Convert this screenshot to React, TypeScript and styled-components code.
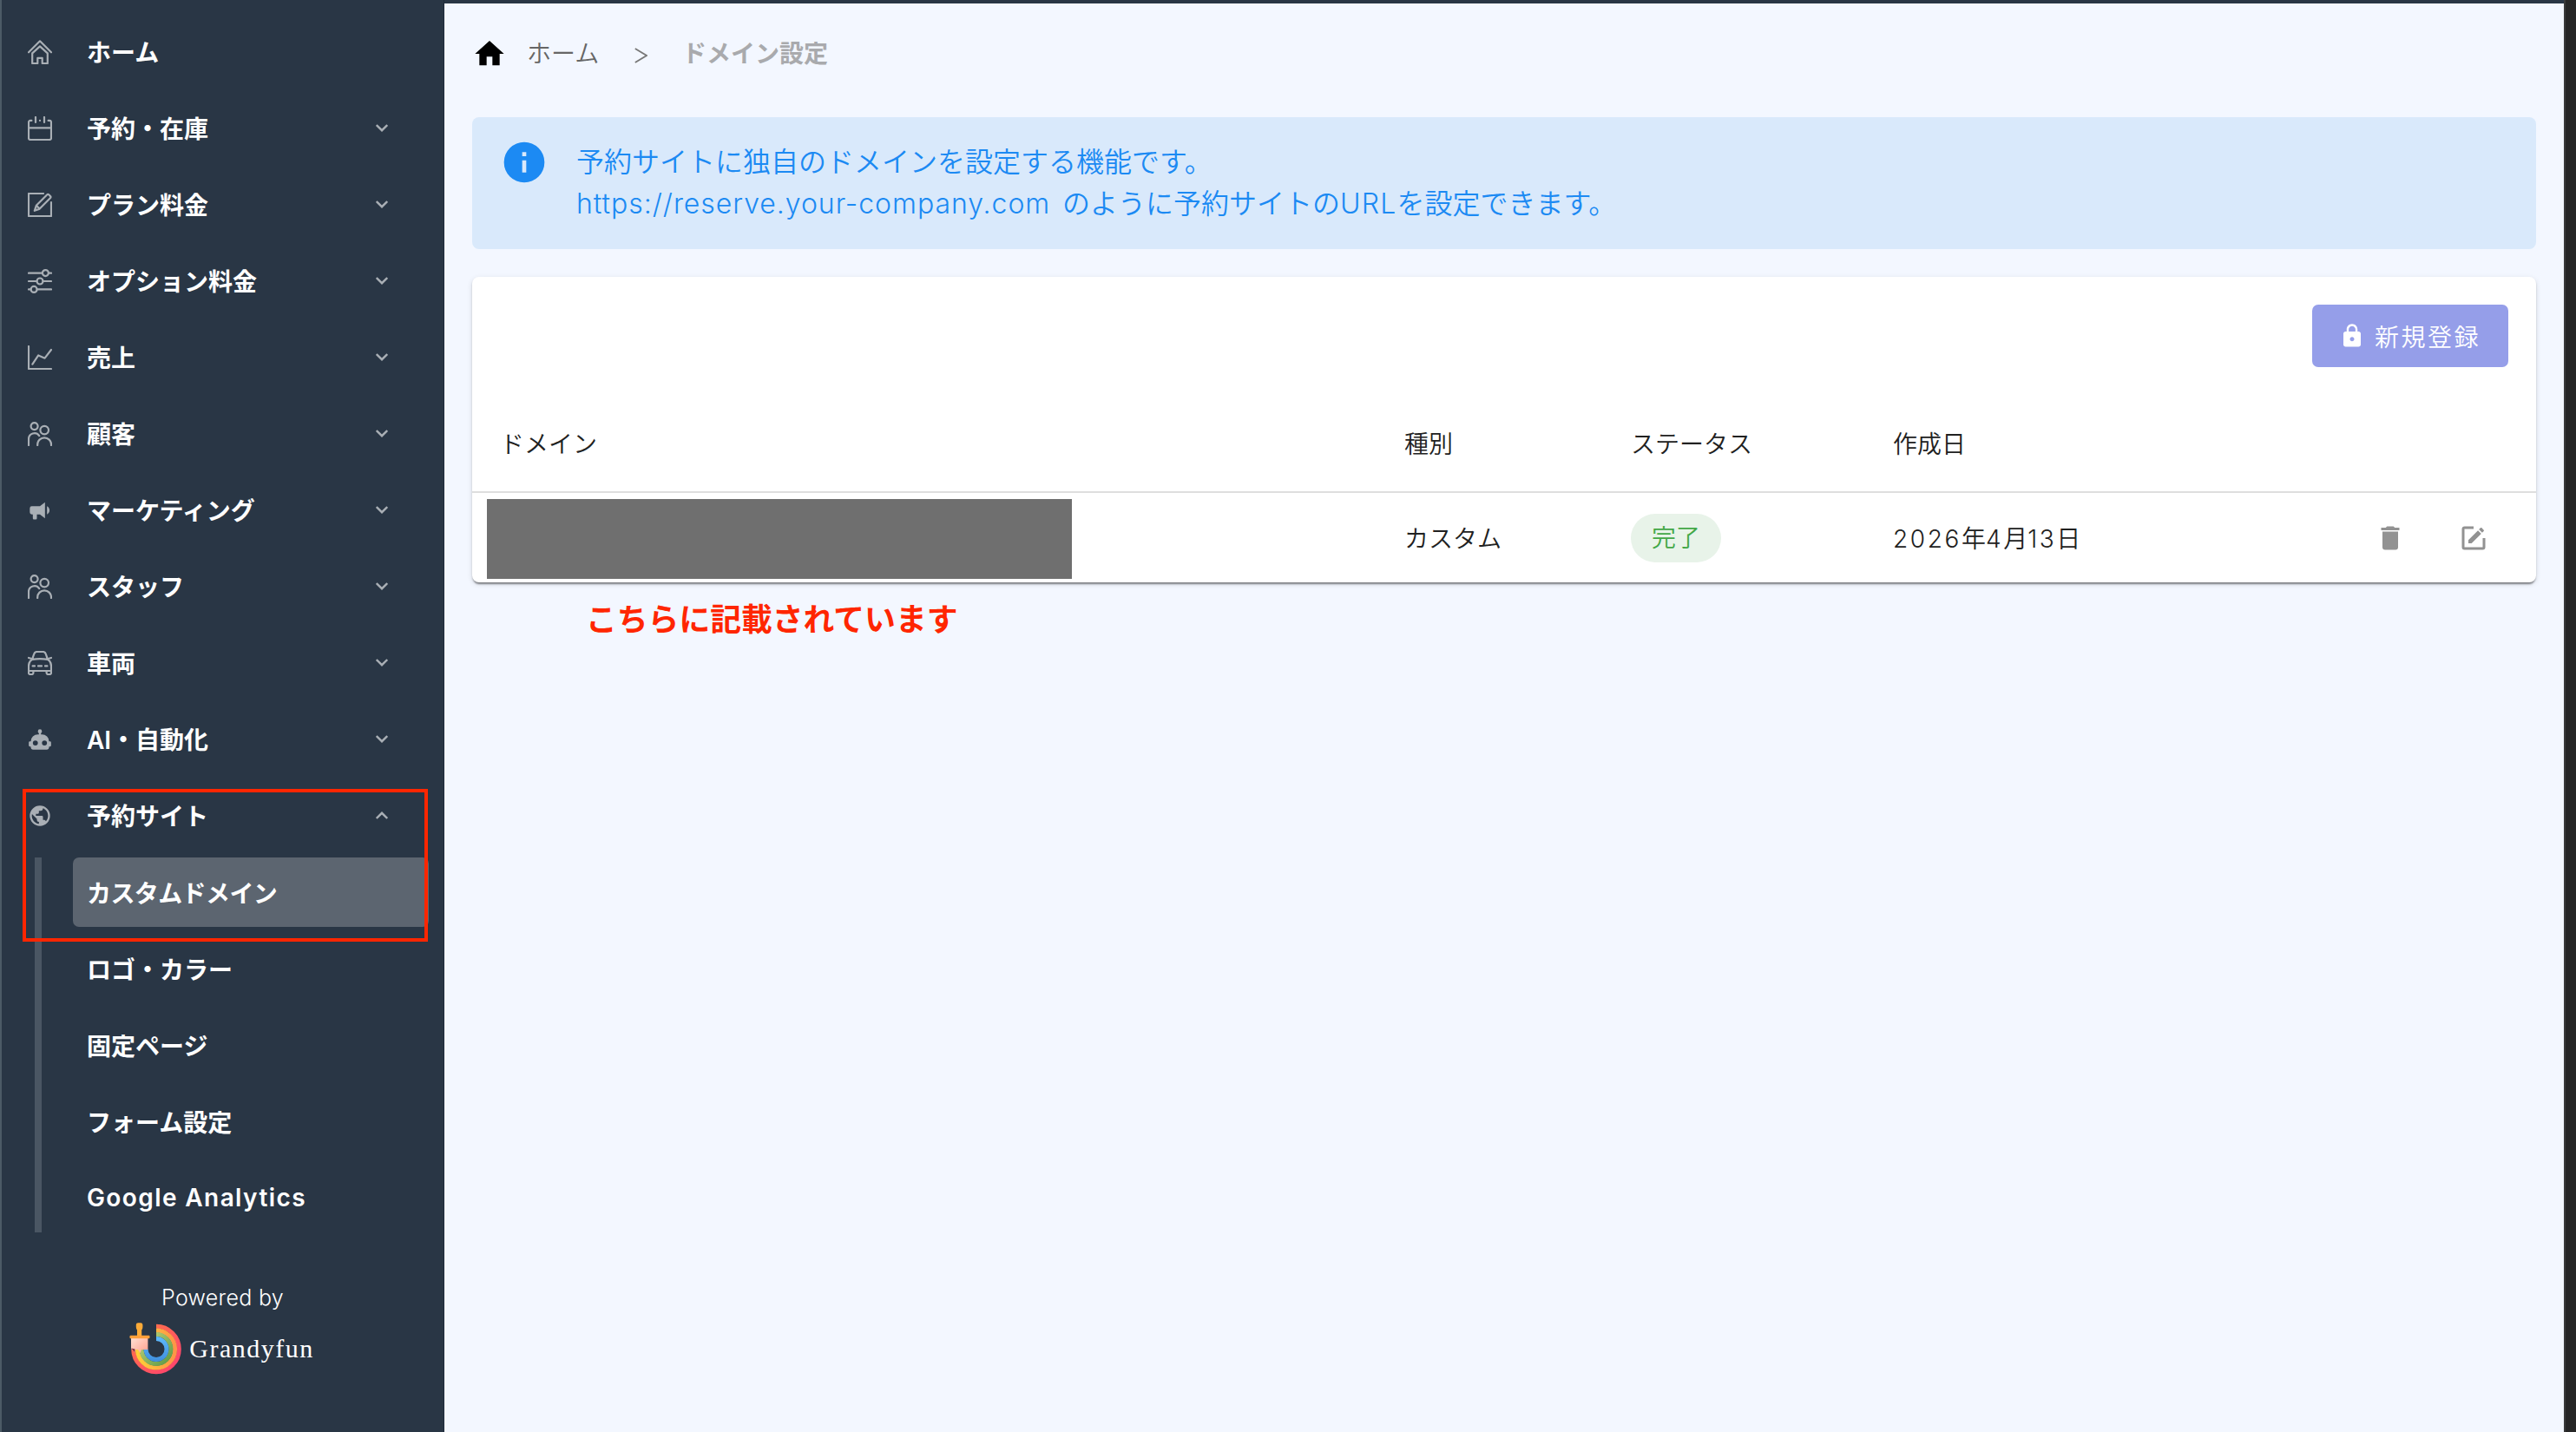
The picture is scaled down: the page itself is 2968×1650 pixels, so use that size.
import React from "react";
import styled, { createGlobalStyle, css } from "styled-components";

const ink = "#293645";
const iconGrey = "#a9afb5";

const GlobalStyle = createGlobalStyle`
  *, *::before, *::after { box-sizing: border-box; }
  html, body { margin: 0; padding: 0; }
  body {
    width: 2968px;
    height: 1650px;
    overflow: hidden;
    background: #262626;
    font-family: Inter, "Noto Sans CJK JP", sans-serif;
    font-size: 28px;
  }
`;

const Shell = styled.div`
  display: flex;
  height: 1650px;
  width: 2968px;
`;

const Sidebar = styled.aside`
  position: relative;
  display: flex;
  flex-direction: column;
  flex: none;
  width: 512px;
  height: 100%;
  padding-top: 16px;
  background: ${ink};
  border-left: 2px solid #4c5b66;
  border-right: 1px solid #1f2b3a;
  color: #fff;
  font-weight: 600;
`;

const NavRow = styled.a`
  display: grid;
  grid-template-columns: 28px 1fr 14px;
  column-gap: 42px;
  align-items: center;
  height: 88px;
  padding: 0 64px 0 30px;
  svg { display: block; color: ${iconGrey}; }
`;

const NavLabel = styled.span`
  line-height: 40px;
  white-space: nowrap;
  margin-left: -2px;
  padding-top: 2px;
`;

const SubNav = styled.div`
  display: flex;
  padding: 4px 17px 0 38px;
`;

const Rail = styled.div`
  width: 8px;
  height: 432px;
  background: #4a5663;
`;

const SubList = styled.div`
  display: flex;
  flex-direction: column;
  flex: 1;
  gap: 8px;
  margin-left: 36px;
`;

const SubItem = styled.a<{ $active?: boolean; $latin?: boolean }>`
  display: flex;
  align-items: center;
  height: 80px;
  padding-left: 16px;
  border-radius: 7px;
  white-space: nowrap;
  ${(p) => p.$active && css`background: #5c6570; letter-spacing: -0.6px;`}
  ${(p) => p.$latin && css`letter-spacing: 1.4px;`}
`;

const Highlight = styled.div`
  position: absolute;
  left: 24px;
  top: 909px;
  width: 467px;
  height: 176px;
  border: 4px solid #ff2600;
`;

const Powered = styled.div`
  display: flex;
  flex-direction: column;
  align-items: center;
  margin-top: 57px;
  font-weight: 300;
  font-size: 25px;
  line-height: 36px;
  letter-spacing: 0.3px;
`;

const Brand = styled.div`
  display: flex;
  align-items: center;
  gap: 9px;
  margin-top: 11px;
  margin-right: 2px;
  font-family: "Liberation Serif", serif;
  font-size: 30px;
  font-weight: 400;
  letter-spacing: 1.5px;
`;

const Main = styled.main`
  flex: none;
  width: 2442px;
  border-top: 4px solid ${ink};
  background: #f3f7ff;
  padding: 0 32px;
`;

const EdgeStrip = styled.div`
  flex: 1;
  border-left: 2px solid #3a3a3a;
  background: #262626;
`;

const Breadcrumb = styled.nav`
  display: flex;
  align-items: center;
  height: 131px;
  padding-bottom: 15px;
  line-height: 40px;
  color: #666;
`;

const CrumbLink = styled.span`
  width: 84px;
  margin-left: 23px;
  font-weight: 350;
`;
const CrumbSep = styled.svg`
  margin: 4px 40px 0 40px;
  display: block;
`;
const CrumbHere = styled.span`
  font-weight: 600;
  color: #a9aaad;
`;

const Notice = styled.section`
  display: flex;
  height: 152px;
  padding: 24px 32px;
  gap: 32px;
  border-radius: 8px;
  background: #d9e9fb;
  color: #1c8af3;
  font-size: 32px;
  font-weight: 350;
  line-height: 48px;
  svg { flex: none; }
`;

const NoticeText = styled.p`
  margin: 4px 0 0;
`;

const Url = styled.span`
  display: inline-block;
  width: 560px;
  letter-spacing: 0.95px;
`;

const Latin = styled.span`
  letter-spacing: 1.2px;
`;

const Card = styled.section`
  height: 352px;
  margin-top: 32px;
  border-radius: 8px;
  background: #fff;
  box-shadow: 0 4px 2px -2px rgba(0, 0, 0, 0.3), 0 2px 2px rgba(0, 0, 0, 0.18), 0 2px 6px rgba(0, 0, 0, 0.12);
  color: #212121;
  font-weight: 350;
`;

const Toolbar = styled.div`
  display: flex;
  justify-content: flex-end;
  height: 136px;
  padding: 32px 32px 0;
`;

const CreateButton = styled.button`
  display: flex;
  align-items: center;
  width: 226px;
  height: 72px;
  padding: 0 0 0 31px;
  gap: 11px;
  border: 0;
  border-radius: 7px;
  background: #959ee9;
  color: #fff;
  font: inherit;
  font-size: 28px;
  letter-spacing: 2.5px;
  svg { flex: none; }
`;

const TableRow = styled.div<{ $head?: boolean }>`
  display: grid;
  grid-template-columns: 1042px 261px 302px 555px 96px 90px;
  align-items: center;
  padding-left: 32px;
  line-height: 40px;
  height: ${(p) => (p.$head ? 113 : 103)}px;
  padding-top: ${(p) => (p.$head ? 3 : 1)}px;
  ${(p) => p.$head && css`border-bottom: 2px solid #dedede;`}
  svg { display: block; color: #929292; }
`;

const Redacted = styled.div`
  width: 674px;
  height: 92px;
  margin: 2px 0 0 -15px;
  background: #6f6f6f;
`;

const Chip = styled.span`
  display: flex;
  align-items: center;
  justify-content: center;
  width: 104px;
  height: 56px;
  border-radius: 28px;
  background: #e8f3e9;
  color: #43a847;
`;

const CellText = styled.span`
  padding-top: 1px;
`;

const Digits = styled.span`
  letter-spacing: 2.6px;
`;

const Callout = styled.p`
  margin: 17px 0 0 131px;
  color: #ff2600;
  font-size: 35.8px;
  line-height: 52px;
  font-weight: 600;
`;

const Line = ({ children }: { children: React.ReactNode }) => (
  <svg width="28" height="28" viewBox="0 0 28 28" fill="none" stroke="currentColor" strokeWidth="2.2" strokeLinejoin="round" strokeLinecap="round">
    {children}
  </svg>
);
const Solid = ({ d, size = 28 }: { d: string; size?: number }) => (
  <svg width={size} height={size} viewBox="0 0 24 24" fill="currentColor"><path d={d} /></svg>
);

const HomeOutline = () => (
  <Line>
    <path d="M1 14.3L14 1.3l13 13" />
    <path d="M5.2 15.4V27h6.1v-6.2h5.4V27h6.1V15.4L14 7.4z" />
  </Line>
);
const CalendarIcon = () => (
  <Line>
    <path d="M4.4 4.9H3a2 2 0 0 0-2 2V25a2 2 0 0 0 2 2h22a2 2 0 0 0 2-2V6.9a2 2 0 0 0-2-2h-1.4M1 13.4h26M9 1v6M19 1v6M14 4.8v.2" />
  </Line>
);
const PlanIcon = () => (
  <Line>
    <path d="M18 1H1v26h26V11" />
    <path d="M7.8 20.8l2-6L22.3 2.2a1.3 1.3 0 0 1 1.9 0l1.9 1.9a1.3 1.3 0 0 1 0 1.9L13.7 18.6zM9.8 14.8l3.9 3.8" />
  </Line>
);
const SlidersIcon = () => (
  <Line>
    <path d="M1 4.6h15.6M24 4.6h3M1 14h9.4M17.6 14H27M1 23.4h2.4M10.8 23.4H27" />
    <circle cx="20.4" cy="4.6" r="3.5" /><circle cx="14" cy="14" r="3.5" /><circle cx="7.1" cy="23.4" r="3.5" />
  </Line>
);
const SalesIcon = () => (
  <Line><path d="M1 1v26h26M5.4 21.6l6.8-10.2 7.4 3.3L27 5" /></Line>
);
const PeopleIcon = () => (
  <Line>
    <circle cx="7.6" cy="5.1" r="4" /><circle cx="19.2" cy="9.6" r="4.8" />
    <path d="M1 27v-7a6.7 6.7 0 0 1 12.2-3.9M11.2 27v-.8a7.9 7.9 0 0 1 15.8 0v.8" />
  </Line>
);
const CarIcon = () => (
  <Line>
    <path d="M5 9.8L7.3 3.4A3.4 3.4 0 0 1 10.500 1h7a3.400 3.400 0 0 1 3.200 2.400L23 9.800M5 9.800c6-.9 12-.9 18 0M1 8l2.600.8M27 8l-2.600.8M4.800 10C2.300 11.600 1 14.500 1 17.600V23h26v-5.400c0-3.100-1.300-6-3.800-7.600M1 23v2.200a1.800 1.800 0 0 0 1.800 1.800h1.800a1.800 1.800 0 0 0 1.800-1.800V23M21.600 23v2.200a1.800 1.800 0 0 0 1.800 1.800h1.800a1.800 1.800 0 0 0 1.800-1.800V23M5.600 17.400H8M12 17.400h4M20 17.400h2.400" />
  </Line>
);

const bullhorn = "M12,8H4A2,2 0 0,0 2,10V14A2,2 0 0,0 4,16H5V20A1,1 0 0,0 6,21H8A1,1 0 0,0 9,20V16H12L17,20V4L12,8M21.5,12C21.5,13.71 20.54,15.26 19,16V8C20.53,8.75 21.5,10.3 21.5,12Z";
const robot = "M12,2A2,2 0 0,1 14,4C14,4.74 13.6,5.39 13,5.73V7H14A7,7 0 0,1 21,14H22A1,1 0 0,1 23,15V18A1,1 0 0,1 22,19H21V20A2,2 0 0,1 19,22H5A2,2 0 0,1 3,20V19H2A1,1 0 0,1 1,18V15A1,1 0 0,1 2,14H3A7,7 0 0,1 10,7H11V5.73C10.4,5.39 10,4.74 10,4A2,2 0 0,1 12,2M7.5,13A2.5,2.5 0 0,0 5,15.5A2.5,2.5 0 0,0 7.5,18A2.5,2.5 0 0,0 10,15.5A2.5,2.5 0 0,0 7.5,13M16.5,13A2.5,2.5 0 0,0 14,15.5A2.5,2.5 0 0,0 16.5,18A2.5,2.5 0 0,0 19,15.5A2.5,2.5 0 0,0 16.5,13Z";
const earth = "M17.9,17.39C17.64,16.59 16.89,16 16,16H15V13A1,1 0 0,0 14,12H8V10H10A1,1 0 0,0 11,9V7H13A2,2 0 0,0 15,5V4.59C17.93,5.77 20,8.64 20,12C20,14.08 19.2,15.97 17.9,17.39M11,19.93C7.05,19.44 4,16.08 4,12C4,11.38 4.08,10.78 4.21,10.21L9,15V16A2,2 0 0,0 11,18M12,2A10,10 0 0,0 2,12A10,10 0 0,0 12,22A10,10 0 0,0 22,12A10,10 0 0,0 12,2Z";
const home = "M10,20V14H14V20H19V12H22L12,3L2,12H5V20H10Z";
const info = "M13,9H11V7H13M13,17H11V11H13M12,2A10,10 0 0,0 2,12A10,10 0 0,0 12,22A10,10 0 0,0 22,12A10,10 0 0,0 12,2Z";
const lock = "M18 8h-1V6c0-2.76-2.24-5-5-5S7 3.24 7 6v2H6c-1.1 0-2 .9-2 2v10c0 1.1.9 2 2 2h12c1.1 0 2-.9 2-2V10c0-1.1-.9-2-2-2zm-6 9c-1.1 0-2-.9-2-2s.9-2 2-2 2 .9 2 2-.9 2-2 2zm3.1-9H8.9V6c0-1.71 1.39-3.1 3.1-3.1s3.1 1.39 3.1 3.1v2z";
const trash = "M19,4H15.5L14.5,3H9.500L8.500,4H5V6H19M6,19A2,2 0 0,0 8,21H16A2,2 0 0,0 18,19V7H6V19Z";
const squareEdit = "M5,3C3.89,3 3,3.89 3,5V19A2,2 0 0,0 5,21H19A2,2 0 0,0 21,19V12H19V19H5V5H12V3H5M17.78,4C17.61,4 17.43,4.07 17.3,4.2L16.08,5.41L18.58,7.91L19.8,6.7C20.06,6.44 20.06,6 19.8,5.75L18.25,4.2C18.12,4.07 17.95,4 17.78,4M15.37,6.12L8,13.5V16H10.5L17.87,8.62L15.37,6.12Z";

const Chevron = ({ up }: { up?: boolean }) => (
  <svg width="14" height="10" viewBox="0 0 14 10" fill="none" stroke="currentColor" strokeWidth="2.4">
    <path d={up ? "M.8 8L7 1.800 13.200 8" : "M.8 1L7 7.200 13.200 1"} />
  </svg>
);

const Logo = () => (
  <svg width="60" height="60" viewBox="0 0 60 60" fill="none">
    <defs>
      <linearGradient id="red" x1="0" y1="0" x2="1" y2="1"><stop offset="0" stopColor="#ff7a45" /><stop offset="1" stopColor="#ff3f70" /></linearGradient>
      <linearGradient id="orange" x1="0" y1="0" x2="1" y2="0"><stop offset="0" stopColor="#ffcf38" /><stop offset="1" stopColor="#ff9447" /></linearGradient>
      <linearGradient id="green" x1="0" y1="0" x2="1" y2="1"><stop offset="0" stopColor="#c3d27c" /><stop offset="1" stopColor="#5b9a44" /></linearGradient>
      <linearGradient id="blue" x1="0" y1="0" x2="0" y2="1"><stop offset="0" stopColor="#5cb8fb" /><stop offset="1" stopColor="#4292df" /></linearGradient>
      <linearGradient id="bristle" x1="0" y1="0" x2="1" y2="1"><stop offset="0" stopColor="#ffe0d3" /><stop offset="1" stopColor="#ff9f8d" /></linearGradient>
    </defs>
    <g strokeWidth="5">
      <path d="M31 4.200A26.300 26.300 0 1 1 4.700 30.500" stroke="url(#red)" />
      <path d="M31 8.900A21.600 21.600 0 1 1 9.400 30.500" stroke="url(#orange)" />
      <path d="M31 13.600A16.900 16.900 0 1 1 14.100 30.500" stroke="url(#green)" />
      <path d="M31 18.500A12 12 0 1 1 19 30.500" stroke="url(#blue)" />
    </g>
    <path d="M2 18H21.400V31H14l-1.500 4L10 31H7l-.5 3L2 30z" fill="url(#bristle)" />
    <path d="M2.200 29.500l4.300 1-.3 3.500z" fill="#7c2f3c" />
    <rect x=".5" y="14.800" width="23" height="3.400" rx="1" fill="#ff9f3a" />
    <path d="M9 15V8.500Q7.800 7 7.800 5V2.500Q7.800.2 10 .2h3Q15.400.2 15.400 2.500V5Q15.400 7 14.200 8.500V15z" fill="#fdab38" />
  </svg>
);

const sections: { label: string; icon: React.ReactNode; leaf?: boolean; open?: boolean }[] = [
  { label: "ホーム", icon: <HomeOutline />, leaf: true },
  { label: "予約・在庫", icon: <CalendarIcon /> },
  { label: "プラン料金", icon: <PlanIcon /> },
  { label: "オプション料金", icon: <SlidersIcon /> },
  { label: "売上", icon: <SalesIcon /> },
  { label: "顧客", icon: <PeopleIcon /> },
  { label: "マーケティング", icon: <Solid d={bullhorn} /> },
  { label: "スタッフ", icon: <PeopleIcon /> },
  { label: "車両", icon: <CarIcon /> },
  { label: "AI・自動化", icon: <Solid d={robot} /> },
  { label: "予約サイト", icon: <Solid d={earth} />, open: true },
];

const pages = ["カスタムドメイン", "ロゴ・カラー", "固定ページ", "フォーム設定", "Google Analytics"];

export default function App() {
  return (
    <>
      <GlobalStyle />
      <Shell>
        <Sidebar>
          {sections.map((s) => (
            <NavRow key={s.label}>
              {s.icon}
              <NavLabel>{s.label}</NavLabel>
              {!s.leaf && <Chevron up={s.open} />}
            </NavRow>
          ))}
          <SubNav>
            <Rail />
            <SubList>
              {pages.map((p, i) => (
                <SubItem key={p} $active={i === 0} $latin={i === 4}>{p}</SubItem>
              ))}
            </SubList>
          </SubNav>
          <Powered>
            <span>Powered by</span>
            <Brand><Logo /><span>Grandyfun</span></Brand>
          </Powered>
          <Highlight />
        </Sidebar>
        <Main>
          <Breadcrumb>
            <svg width="40" height="40" viewBox="0 0 24 24" fill="#000"><path d={home} /></svg>
            <CrumbLink>ホーム</CrumbLink>
            <CrumbSep width="15" height="18" viewBox="0 0 15 18" fill="none" stroke="#777" strokeWidth="1.8">
              <path d="M.8 1L14 9 .8 17" />
            </CrumbSep>
            <CrumbHere>ドメイン設定</CrumbHere>
          </Breadcrumb>
          <Notice>
            <Solid d={info} size={56} />
            <NoticeText>
              予約サイトに独自のドメインを設定する機能です。<br />
              <Url>https://reserve.your-company.com</Url>のように予約サイトの<Latin>URL</Latin>を設定できます。
            </NoticeText>
          </Notice>
          <Card>
            <Toolbar>
              <CreateButton><Solid d={lock} size={30} />新規登録</CreateButton>
            </Toolbar>
            <TableRow $head>
              <span>ドメイン</span><span>種別</span><span>ステータス</span><span>作成日</span>
            </TableRow>
            <TableRow>
              <Redacted />
              <CellText>カスタム</CellText>
              <Chip>完了</Chip>
              <CellText>
                <Digits>2026</Digits>年<Digits>4</Digits>月<Digits>13</Digits>日
              </CellText>
              <Solid d={trash} size={36} />
              <Solid d={squareEdit} size={36} />
            </TableRow>
          </Card>
          <Callout>こちらに記載されています</Callout>
        </Main>
        <EdgeStrip />
      </Shell>
    </>
  );
}
